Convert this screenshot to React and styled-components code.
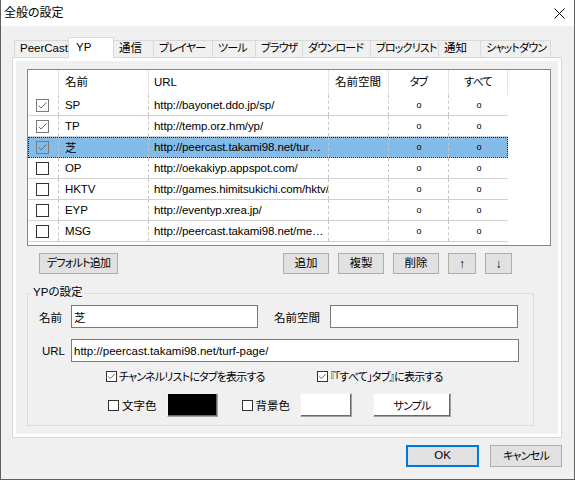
import React from 'react';
import styled, { createGlobalStyle, css } from 'styled-components';

const FONT = `"Liberation Sans", "Noto Sans CJK JP", "Noto Sans", sans-serif`;

const Global = createGlobalStyle`
  html, body { margin: 0; padding: 0; background: #f0f0f0; }
  body {
    font-family: ${FONT};
    font-size: 11.5px;
    color: #000;
    font-feature-settings: "palt";
  }
  * { box-sizing: border-box; }
`;

const Kana = styled.span`
  font-size: 11px;
  letter-spacing: -0.8px;
`;

const Window = styled.div`
  width: 575px;
  height: 480px;
  border: 1px solid #5f5f5f;
  border-top: none;
  display: flex;
  flex-direction: column;
  background: #f0f0f0;
`;

const TitleBar = styled.div`
  height: 26px;
  background: #fff;
  display: flex;
  align-items: center;
  justify-content: space-between;
  padding-left: 3px;
  flex: none;
`;

const Title = styled.span`
  font-size: 12px;
  line-height: 16px;
`;

const CloseBtn = styled.div`
  width: 30px;
  height: 26px;
  display: flex;
  align-items: center;
  justify-content: center;
`;

const Body = styled.div`
  flex: 1;
  display: flex;
  flex-direction: column;
  padding: 11px 12px 12px 11px;
`;

const TabStrip = styled.div`
  height: 20px;
  margin-left: 2px;
  display: flex;
  align-items: flex-end;
  position: relative;
  z-index: 1;
`;

const Tab = styled.div`
  width: ${p => p.$w + 1}px;
  margin-right: -1px;
  height: ${p => (p.$active ? 21 : 17)}px;
  margin-bottom: ${p => (p.$active ? -1 : 0)}px;
  border: 1px solid #d9d9d9;
  border-bottom: none;
  background: ${p => (p.$active ? '#fff' : '#f0f0f0')};
  padding-left: ${p => (p.$active ? 7 : 5)}px;
  padding-top: ${p => (p.$active ? 2 : 0)}px;
  line-height: 15px;
  white-space: nowrap;
  overflow: hidden;
  position: relative;
  z-index: ${p => (p.$active ? 2 : 1)};
`;

const Panel = styled.div`
  height: 381px;
  border: 1px solid #d9d9d9;
  background: #fff;
  padding: 3px;
`;

const PanelInner = styled.div`
  height: 100%;
  background: #f0f0f0;
  display: flex;
  flex-direction: column;
  padding: 8px 0 0 11px;
`;

const ListFrame = styled.div`
  width: 524px;
  height: 177px;
  border: 1px solid #828790;
  background: #fff;
  overflow: hidden;
  flex: none;
`;

const GridRow = styled.div`
  display: grid;
  grid-template-columns: 31px 90px 180px 60px 60px 59px;
  width: 480px;
`;

const HeaderRow = styled(GridRow)`
  height: 25px;
`;

const HeaderCell = styled.div`
  border-right: 1px solid #e5e5e5;
  padding-left: ${p => p.$pad || 0}px;
  text-align: ${p => (p.$center ? 'center' : 'left')};
  line-height: 25px;
  white-space: nowrap;
`;

const Row = styled(GridRow)`
  height: 21px;
  border-bottom: 1px solid #d2d2d2;
  letter-spacing: -0.1px;
  background: ${p => (p.$selected ? '#83bbe9' : 'transparent')};
  ${p =>
    p.$selected &&
    css`
      outline: 1px dotted #222;
      outline-offset: -1px;
    `}
`;

const Cell = styled.div`
  border-right: ${p => (p.$last ? 'none' : '1px dashed #c4c4c4')};
  padding-left: ${p => p.$pad || 0}px;
  display: flex;
  align-items: center;
  justify-content: ${p => (p.$center ? 'center' : 'flex-start')};
  overflow: hidden;
  white-space: nowrap;
`;

const Dot = styled.span`
  font-size: 9px;
  line-height: 9px;
  padding-left: 1px;
`;

const Box = styled.span`
  width: ${p => p.$size}px;
  height: ${p => p.$size}px;
  border: 1px solid ${p => (p.$muted ? '#7a7a7a' : '#333')};
  background: ${p => (p.$clear ? 'transparent' : '#fff')};
  display: inline-flex;
  align-items: center;
  justify-content: center;
  flex: none;
`;

const CheckBox = ({ checked, size = 13, muted, clear }) => (
  <Box $size={size} $muted={muted} $clear={clear}>
    {checked && (
      <svg width={size - 2} height={size - 2} viewBox="0 0 11 11">
        <polyline points="1.5,5.5 4,8 9.5,2.5" fill="none" stroke={muted ? '#6a6a6a' : '#444'} strokeWidth="1" />
      </svg>
    )}
  </Box>
);

const ButtonRow = styled.div`
  width: 524px;
  margin-top: 7px;
  height: 21px;
  display: flex;
  justify-content: space-between;
  padding: 0 39px 0 12px;
  flex: none;
`;

const ButtonGroup = styled.div`
  display: flex;
  gap: 9px;
`;

const Button = styled.button`
  width: ${p => p.$w}px;
  height: ${p => p.$h || 21}px;
  border: ${p => (p.$default ? '2px solid #0078d7' : '1px solid #adadad')};
  background: #e1e1e1;
  font: inherit;
  font-size: 11.5px;
  color: #000;
  padding: 0;
  display: inline-flex;
  align-items: center;
  justify-content: center;
  line-height: 1;
`;

const Arrow = styled.span`
  font-size: 12px;
  line-height: 12px;
`;

const GroupBox = styled.div`
  margin-top: 19px;
  width: 507px;
  height: 133px;
  border: 1px solid #dcdcdc;
  padding-left: 11px;
  display: flex;
  flex-direction: column;
  flex: none;
`;

const Legend = styled.span`
  align-self: flex-start;
  margin: -10px 0 0 -8px;
  padding: 0 2px;
  background: #f0f0f0;
  line-height: 16px;
`;

const FieldRow = styled.div`
  display: flex;
  align-items: center;
  height: ${p => p.$h || 23}px;
  margin-top: ${p => p.$mt || 0}px;
  padding-left: ${p => p.$pl || 0}px;
`;

const Label = styled.span`
  width: ${p => p.$w}px;
  margin-left: ${p => p.$ml || 0}px;
  padding-left: ${p => p.$pl || 0}px;
  white-space: nowrap;
  flex: none;
`;

const TextBox = styled.input`
  width: ${p => p.$w}px;
  height: 23px;
  border: 1px solid #7a7a7a;
  background: #fff;
  font: inherit;
  font-size: 11.5px;
  padding: 0 2px;
  margin: 0;
  color: #000;
  outline: none;
`;

const CheckField = styled.label`
  display: flex;
  align-items: center;
  gap: ${p => p.$gap || 2}px;
  width: ${p => (p.$w ? `${p.$w}px` : 'auto')};
  margin-right: ${p => p.$mr || 0}px;
  white-space: nowrap;
  flex: none;
`;

const Swatch = styled.div`
  width: ${p => p.$w}px;
  height: 24px;
  margin-right: ${p => p.$mr || 0}px;
  background: ${p => p.$color};
  border: 1px solid;
  border-color: #f4f4f4 #a0a0a0 #a0a0a0 #f4f4f4;
  box-shadow: inset -1px -1px 0 #696969;
  display: flex;
  align-items: center;
  justify-content: center;
  flex: none;
`;

const Footer = styled.div`
  display: flex;
  justify-content: flex-end;
  gap: 11px;
  margin-top: 7px;
`;

const tabs = [
  ['PeerCast', 54],
  ['YP', 45, true],
  ['通信', 40],
  ['プレイヤー', 59, false, true],
  ['ツール', 43, false, true],
  ['ブラウザ', 47, false, true],
  ['ダウンロード', 68, false, true],
  ['ブロックリスト', 68, false, true],
  ['通知', 42],
  ['シャットダウン', 70, false, true],
];

const rows = [
  { checked: true, name: 'SP', url: 'http://bayonet.ddo.jp/sp/' },
  { checked: true, name: 'TP', url: 'http://temp.orz.hm/yp/' },
  { checked: true, name: '芝', url: 'http://peercast.takami98.net/tur…', selected: true },
  { checked: false, name: 'OP', url: 'http://oekakiyp.appspot.com/' },
  { checked: false, name: 'HKTV', url: 'http://games.himitsukichi.com/hktv/' },
  { checked: false, name: 'EYP', url: 'http://eventyp.xrea.jp/' },
  { checked: false, name: 'MSG', url: 'http://peercast.takami98.net/me…' },
];

export default function App() {
  return (
    <>
      <Global />
      <Window>
        <TitleBar>
          <Title>全般の設定</Title>
          <CloseBtn>
            <svg width="11" height="11" viewBox="0 0 11 11">
              <path d="M0.5 0.5 L10.5 10.5 M10.5 0.5 L0.5 10.5" stroke="#000" strokeWidth="1" />
            </svg>
          </CloseBtn>
        </TitleBar>
        <Body>
          <TabStrip>
            {tabs.map(([label, w, active, kana]) => (
              <Tab key={label} $w={w} $active={active}>
                {kana ? <Kana>{label}</Kana> : label}
              </Tab>
            ))}
          </TabStrip>
          <Panel>
            <PanelInner>
              <ListFrame>
                <HeaderRow>
                  <HeaderCell />
                  <HeaderCell $pad={6}>名前</HeaderCell>
                  <HeaderCell $pad={5}>URL</HeaderCell>
                  <HeaderCell $pad={6}>名前空間</HeaderCell>
                  <HeaderCell $center><Kana>タブ</Kana></HeaderCell>
                  <HeaderCell $center><Kana>すべて</Kana></HeaderCell>
                </HeaderRow>
                {rows.map(r => (
                  <Row key={r.name} $selected={r.selected}>
                    <Cell $pad={8}>
                      <CheckBox checked={r.checked} muted={r.checked} clear />
                    </Cell>
                    <Cell $pad={6}>{r.name}</Cell>
                    <Cell $pad={5}>{r.url}</Cell>
                    <Cell />
                    <Cell $center>
                      <Dot>o</Dot>
                    </Cell>
                    <Cell $center $last>
                      <Dot>o</Dot>
                    </Cell>
                  </Row>
                ))}
              </ListFrame>

              <ButtonRow>
                <Button $w={79}><Kana>デフォルト追加</Kana></Button>
                <ButtonGroup>
                  <Button $w={46}>追加</Button>
                  <Button $w={46}>複製</Button>
                  <Button $w={46}>削除</Button>
                  <Button $w={28}>
                    <Arrow>↑</Arrow>
                  </Button>
                  <Button $w={27}>
                    <Arrow>↓</Arrow>
                  </Button>
                </ButtonGroup>
              </ButtonRow>

              <GroupBox>
                <Legend>YPの設定</Legend>
                <FieldRow $mt={5}>
                  <Label $w={32}>名前</Label>
                  <TextBox $w={187} defaultValue="芝" readOnly />
                  <Label $w={56} $ml={16}>名前空間</Label>
                  <TextBox $w={188} defaultValue="" readOnly />
                </FieldRow>
                <FieldRow $mt={11}>
                  <Label $w={32} $pl={3}>URL</Label>
                  <TextBox $w={448} defaultValue="http://peercast.takami98.net/turf-page/" readOnly />
                </FieldRow>
                <FieldRow $mt={6} $h={16} $pl={67}>
                  <CheckField $w={211}>
                    <CheckBox checked size={11} />
                    <Kana>チャンネルリストにタブを表示する</Kana>
                  </CheckField>
                  <CheckField>
                    <CheckBox checked size={11} />
                    <Kana>『「すべて」タブ』に表示する</Kana>
                  </CheckField>
                </FieldRow>
                <FieldRow $mt={9} $h={24} $pl={69}>
                  <CheckField $gap={3} $mr={10}>
                    <CheckBox size={11} />
                    文字色
                  </CheckField>
                  <Swatch $w={51} $color="#000" $mr={24} />
                  <CheckField $gap={3} $mr={10}>
                    <CheckBox size={11} />
                    背景色
                  </CheckField>
                  <Swatch $w={52} $color="#fff" $mr={21} />
                  <Swatch $w={78} $color="#fff"><Kana>サンプル</Kana></Swatch>
                </FieldRow>
              </GroupBox>
            </PanelInner>
          </Panel>
          <Footer>
            <Button $w={73} $h={22} $default>OK</Button>
            <Button $w={72} $h={22}><Kana>キャンセル</Kana></Button>
          </Footer>
        </Body>
      </Window>
    </>
  );
}
